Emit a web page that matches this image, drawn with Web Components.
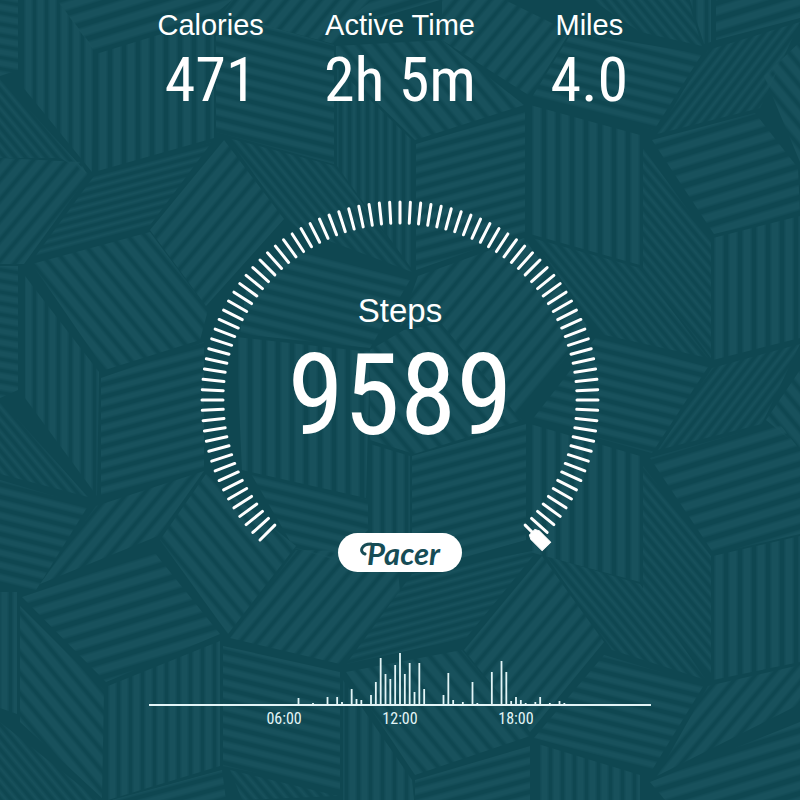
<!DOCTYPE html>
<html lang="en">
<head>
<meta charset="utf-8">
<meta name="viewport" content="width=device-width, initial-scale=1">
<title>Pacer daily steps</title>
<style>
html,body{margin:0;min-height:100%;background:#0f4751}
</style>
</head>
<body>
<pacer-share>
  <stat-row slot="stats">
    <stat-item label="Calories">471</stat-item>
    <stat-item label="Active Time">2h 5m</stat-item>
    <stat-item label="Miles">4.0</stat-item>
  </stat-row>
  <step-dial slot="dial" label="Steps" value="9589"><pacer-badge>Pacer</pacer-badge></step-dial>
  <activity-chart slot="chart"><span>06:00</span><span>12:00</span><span>18:00</span></activity-chart>
</pacer-share>
<script>
const attach = (el, html) => { el.attachShadow({mode:'open'}).innerHTML = html; };

/* Woven backdrop: stripe styles are [angle, period, stripe width]; each patch is [style, polygon points]. */
const STYLES = {
  v:[0,12,7], v2:[0,14,8], vt:[0,9,4],
  r:[-105,12,6], r2:[-107,15,8], rt:[-105,8,3],
  d:[-76,12,6], f:[40,13,8], ft:[38,8,3],
  b:[-40,13,8], bt:[-40,8,3], h:[-80,11,6]
};
const PATCHES = [
 ['h','0,0 18,0 18,70 0,76'],['v','22,0 57,0 95,50 92,172 22,86'],
 ['r2','57,0 232,0 215,14 95,52'],['v2','96,54 214,18 214,138 94,172'],
 ['d','216,36 240,18 334,45 334,164 216,132'],['f','232,0 372,0 334,44 222,14'],
 ['b','336,46 442,40 524,105 415,140 336,62'],['vt','337,68 414,142 414,272 337,166'],
 ['bt','0,78 88,174 60,158 0,158'],['f','0,158 80,162 88,176 24,264 0,264'],
 ['rt','94,176 212,142 148,228 34,258'],['f','224,140 284,219 206,306 150,230'],
 ['bt','228,138 335,166 412,272 300,230 284,216'],['b','32,264 150,232 208,310 200,340 105,370'],
 ['h','0,266 18,266 18,390 0,398'],['v','25,276 99,372 97,496 25,398'],
 ['r','101,378 204,342 204,468 101,496'],['d','286,248 410,280 370,348 240,334 246,290'],
 ['v2','236,337 370,352 366,498 242,470'],['f','418,276 524,238 590,330 516,414 440,322 400,326'],
 ['r','416,144 525,112 525,232 416,270'],['f','442,0 505,0 570,32 530,96 442,40'],
 ['r2','336,30 440,0 372,0'],
 ['d','572,32 702,54 654,130 532,97'],['v2','530,105 640,135 640,265 530,234'],
 ['bt','643,148 711,242 711,358 643,268'],['bt','532,238 640,268 708,358 600,334'],
 ['r2','652,140 755,113 798,168 800,214 714,234'],['ft','708,50 800,22 760,108 657,134'],
 ['b','764,76 800,42 800,162'],['bt','592,0 688,0 702,46 640,32'],
 ['v','690,0 711,0 711,42 704,44'],['r2','716,0 800,0 800,18 716,40'],
 ['v2','713,238 800,216 800,338 713,360'],['d','596,337 708,367 652,453 532,420'],
 ['ft','712,368 800,344 762,424 658,450'],['r2','650,458 778,422 800,450 800,534 714,554'],
 ['b','766,420 800,370 800,448'],
 ['v2','530,424 640,456 640,582 530,552'],['bt','643,466 711,556 711,676 643,590'],
 ['bt','546,556 640,584 706,680 612,650'],['v2','713,556 800,536 800,662 713,680'],
 ['b','404,330 438,324 522,420 414,454 370,440 370,350'],
 ['r','412,456 526,424 526,540 412,572'],
 ['v','370,444 410,456 410,534 370,534'],
 ['f','542,556 604,642 530,732 464,650'],['d','604,655 704,685 652,770 534,738'],
 ['d','0,480 88,506 36,590 0,584'],['bt','0,400 88,497 0,474'],
 ['f','96,506 204,471 158,536 40,584'],['b','206,474 296,546 228,634 160,540'],
 ['r2','22,597 154,552 220,634 106,682'],['v','0,592 17,592 17,714 0,708'],
 ['b','20,606 104,690 102,798 20,722'],['v','108,686 220,641 220,766 108,800'],
 ['d','223,646 340,672 340,790 223,766'],['f','296,550 396,552 400,592 340,664 230,638'],
 ['d','250,472 368,500 368,530 336,560 294,548'],['rt','346,664 466,638 538,550 412,574'],
 ['b','346,672 462,650 530,736 415,775'],['v','343,680 412,780 414,800 343,800'],
 ['r','415,780 530,746 530,800 415,800'],['v','538,744 640,775 640,800 538,800'],
 ['f','708,686 800,665 800,704 657,776'],['r2','650,782 800,722 800,800 665,800'],
 ['bt','0,722 98,800 0,800'],['r','112,800 222,770 226,800'],['bt','230,770 338,796 242,800']
];
customElements.define('woven-backdrop', class extends HTMLElement {
  constructor(){
    super();
    const defs = Object.entries(STYLES).map(([k,[a,p,w]]) =>
      `<pattern id="${k}" width="${p}" height="${p}" patternUnits="userSpaceOnUse" patternTransform="rotate(${a})"><g fill="#1a535d"><rect width="${w+2}" height="${p}" opacity=".35"/><rect x="1" width="${w}" height="${p}" opacity=".4"/><rect x="2" width="${w-2}" height="${p}" opacity=".6"/></g></pattern>`).join('');
    attach(this, `<style>:host{display:block;overflow:hidden}svg{display:block;width:100%;height:100%}</style>
      <svg viewBox="0 0 800 800" preserveAspectRatio="xMidYMid slice" aria-hidden="true"><defs>${defs}</defs>
      <rect width="800" height="800" fill="#0f4751"/>
      ${PATCHES.map(([k,p]) => `<polygon points="${p}" fill="url(#${k})"/>`).join('')}</svg>`);
  }
});
customElements.define('pacer-share', class extends HTMLElement {
  constructor(){
    super();
    attach(this, `<style>
      :host{display:block;position:relative;min-height:100vh;box-sizing:border-box;padding-top:8px;color:#fff;font-family:"Liberation Sans",Arial,sans-serif}
      woven-backdrop{position:absolute;inset:0}
      main{position:relative;display:flex;flex-direction:column;align-items:stretch}
      </style><woven-backdrop></woven-backdrop>
      <main><slot name="stats"></slot><slot name="dial"></slot><slot name="chart"></slot></main>`);
  }
});
customElements.define('stat-row', class extends HTMLElement {
  constructor(){
    super();
    attach(this, `<style>:host{display:grid;grid-template-columns:repeat(3,1fr);width:71%;margin:0 auto}</style><slot></slot>`);
  }
});
customElements.define('stat-item', class extends HTMLElement {
  constructor(){
    super();
    attach(this, `<style>:host{display:flex;flex-direction:column;align-items:center;white-space:nowrap}
      .l{font-size:29px;line-height:34px}
      .v{font:62px/76px "Roboto Condensed","Arial Narrow",sans-serif}</style>
      <span class="l">${this.getAttribute('label')}</span><span class="v"><slot></slot></span>`);
  }
});
customElements.define('step-dial', class extends HTMLElement {
  constructor(){
    super();
    let ticks = '';
    for (let a = -135; a <= 135; a += 3) ticks += `<path d="M0-177V-198" transform="rotate(${a})"/>`;
    attach(this, `<style>
      :host{display:grid;width:50%;min-width:320px;margin:82px auto 0}
      svg,.c{grid-area:1/1}
      svg{width:100%;display:block}
      .c{display:flex;flex-direction:column;align-items:center;padding-top:92px}
      .l{font-size:33px;line-height:38px}
      .v{font:114px/130px "Roboto Condensed","Arial Narrow",sans-serif}
      ::slotted(*){margin-top:73px}</style>
      <svg viewBox="-200 -200 400 400" aria-hidden="true"><g stroke="#fff" stroke-width="3" stroke-linecap="round">${ticks}</g>
      <path d="M-4-187L-6-191V-207H6V-191L4-187Z" fill="#fff" stroke="#fff" stroke-width="1" transform="rotate(135)"/></svg>
      <div class="c"><span class="l">${this.getAttribute('label')}</span><span class="v">${this.getAttribute('value')}</span><slot></slot></div>`);
  }
});
customElements.define('pacer-badge', class extends HTMLElement {
  constructor(){
    super();
    attach(this, `<style>
      :host{display:flex;align-items:center;justify-content:center;width:124px;height:39px;border-radius:20px;background:#fff;color:#174d56;font:italic 700 31px/36px Lato,sans-serif}
      svg{width:12px;height:24px;margin-right:-5px}</style>
      <svg viewBox="0 0 12 24" fill="none" stroke="currentColor" stroke-width="3" stroke-linecap="round" aria-hidden="true"><path d="M5 13C-1 11 1 3 11 3"/></svg><slot></slot>`);
  }
});
/* Steps per quarter hour: [slot of the day, bar height]. */
const BARS = [[27,6],[30,1],[33,7],[35,7],[36,2],[38,15],[39,5],[40,4],[42,9],[43,22],[44,46],[45,30],[46,25],[47,39],[48,51],[49,30],[50,41],[51,12],[52,41],[53,15],[57,9],[58,31],[59,4],[61,2],[63,22],[64,1],[67,32],[69,43],[70,32],[71,3],[72,7],[73,4],[74,1],[76,2],[77,7],[79,1],[81,3],[82,1]];
customElements.define('activity-chart', class extends HTMLElement {
  constructor(){
    super();
    attach(this, `<style>
      :host{display:block;width:63%;max-width:1000px;margin:53px auto 0;color:#e3f5f7;font:16px/20px "Roboto Condensed","Arial Narrow",sans-serif}
      svg{display:block;width:100%}
      .x{display:grid;grid-template-columns:repeat(3,1fr);justify-items:center;padding:3px 15.5% 0}</style>
      <svg viewBox="-252 -51 504 53" aria-hidden="true"><g fill="currentColor">
      ${BARS.map(([n,h]) => `<rect x="${((n-48)*29/6-0.9).toFixed(2)}" y="${-h}" width="1.8" height="${h}"/>`).join('')}
      <rect x="-251" width="502" height="2"/></g></svg>
      <div class="x"><slot></slot></div>`);
  }
});
</script>
</body>
</html>
